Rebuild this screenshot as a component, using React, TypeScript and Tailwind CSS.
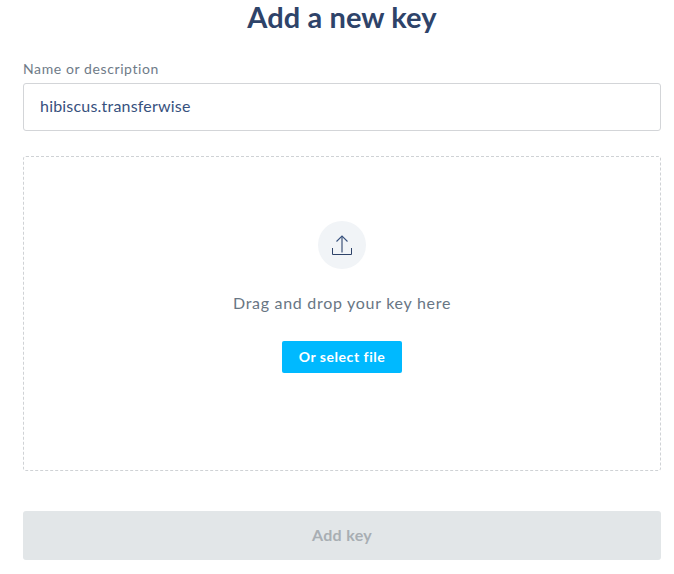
export default function App() {
  return (
    <div className="w-[674px] h-[574px] bg-white overflow-hidden px-[23px] pr-[13px] font-['Lato','Open_Sans',sans-serif]">
      <h1 className="h-[34px] pt-[1px] text-center text-[29px] leading-[32px] font-bold text-[#2e4369] tracking-[0.1px]">Add a new key</h1>
      <div className="mt-[25px] h-[20px] text-[14px] leading-[20px] text-[#6f7b88] tracking-[0.6px]">Name or description</div>
      <div className="mt-[4px] h-[48px] pb-[2px] flex items-center rounded-[3px] border border-[#d3d5d8] px-[16px] text-[16px] leading-[22px] text-[#37517e] tracking-[0.2px]">hibiscus.transferwise</div>
      <div className="mt-[25px] h-[315px] flex flex-col items-center rounded-[3px] border border-dashed border-[#cfd2d5] pt-[64px]">
        <div className="w-[48px] h-[48px] rounded-full bg-[#f1f4f7] flex items-center justify-center">
          <svg width="24" height="24" viewBox="0 0 24 24" fill="none">
            <path d="M12 3.5V19.5" stroke="#8593ab" strokeWidth="2" />
            <path d="M6.5 8.5L12 3L17.5 8.5" stroke="#37517e" strokeWidth="1.1" />
            <path d="M2.5 15V21.5H21.5V15" stroke="#2e4369" strokeWidth="1" />
          </svg>
        </div>
        <p className="mt-[23px] text-[16px] leading-[22px] text-[#687684] tracking-[0.71px]">Drag and drop your key here</p>
        <button className="mt-[27px] w-[120px] h-[32px] pb-[2px] rounded-[2px] bg-[#00b9ff] text-white text-[14px] font-bold tracking-[0.55px]">Or select file</button>
      </div>
      <button className="mt-[40px] w-full h-[49px] pb-[2px] rounded-[3px] bg-[#e2e6e8] text-[#a8aeb3] text-[16px] font-bold tracking-[0.3px]">Add key</button>
    </div>
  );
}
